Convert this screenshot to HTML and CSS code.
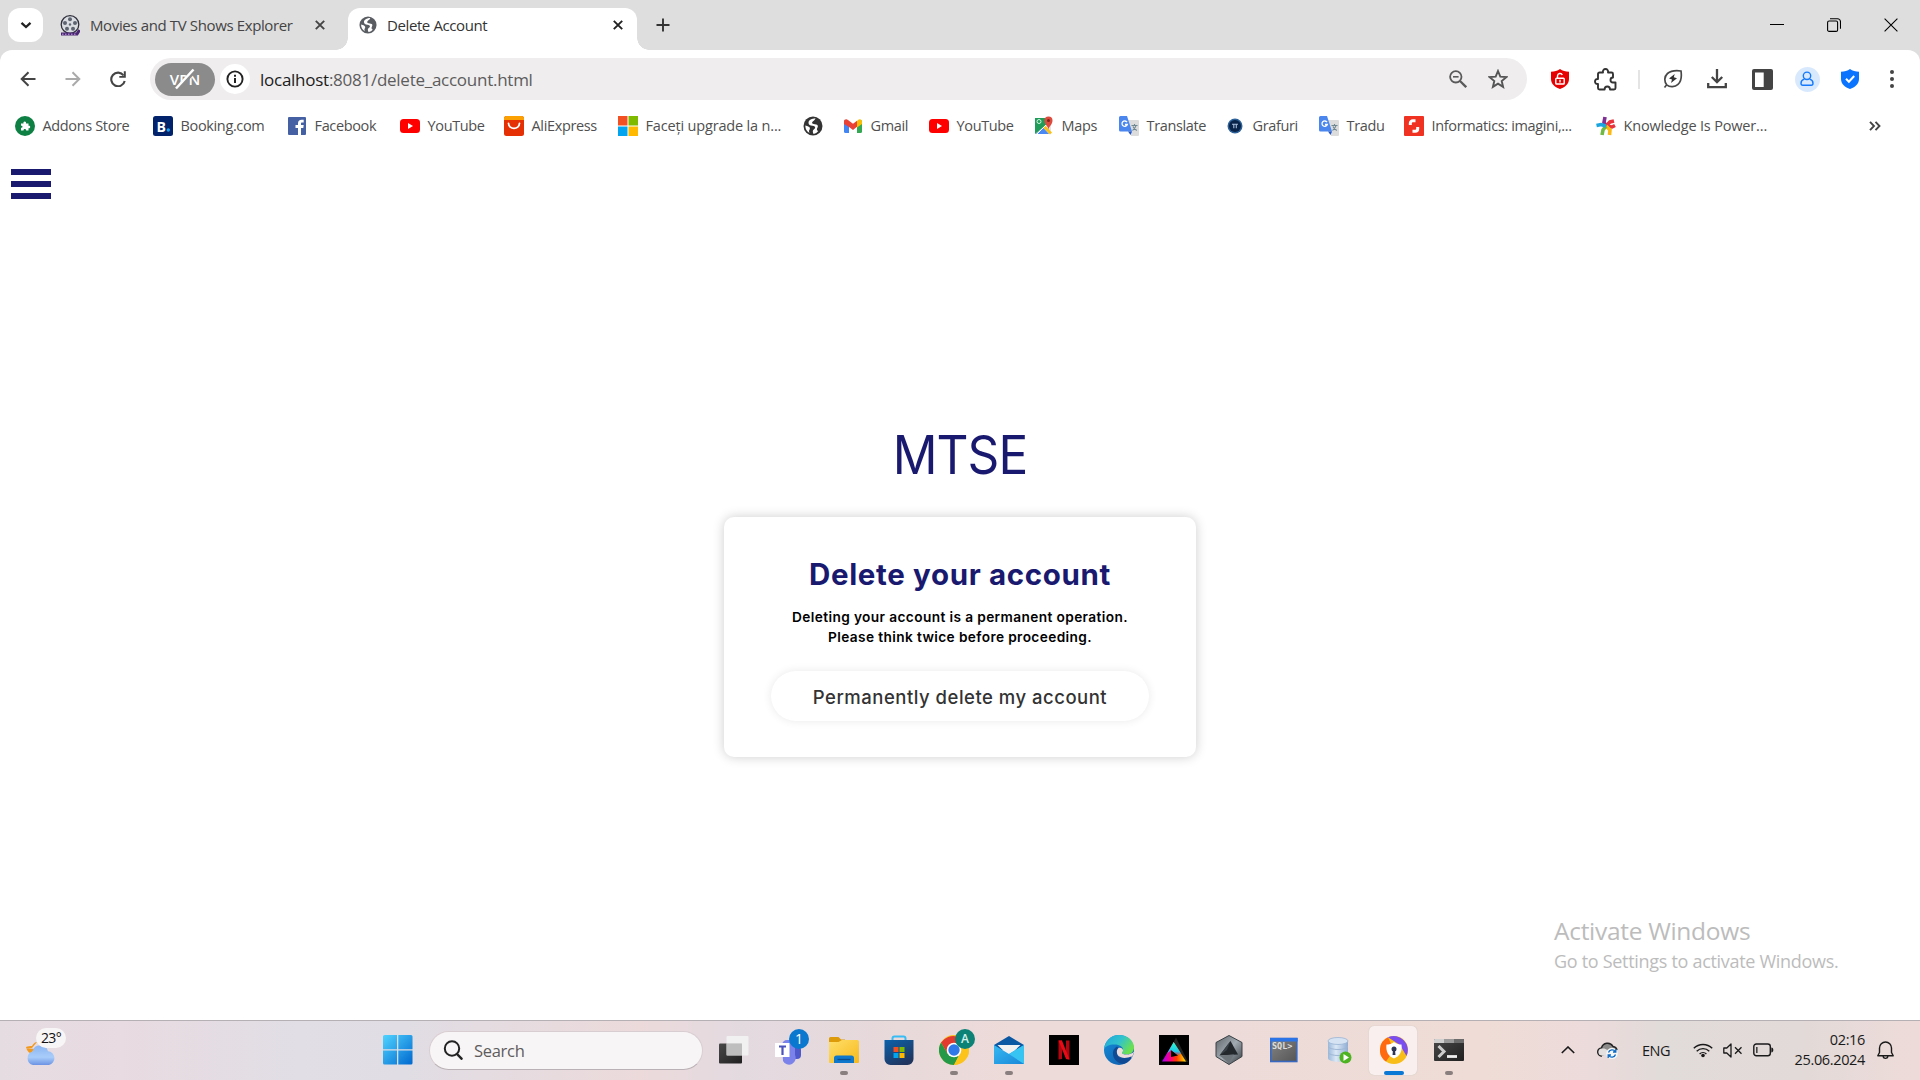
FILE: index.html
```html
<!DOCTYPE html>
<html lang="en">
<head>
<meta charset="utf-8">
<title>Delete Account</title>
<link rel="stylesheet" href="styles.css">
</head>
<body>
<svg class="defs" width="0" height="0" aria-hidden="true">
  <defs>
    <linearGradient id="gWin" x1="0" y1="0" x2="1" y2="1"><stop offset="0" stop-color="#4fd4ff"/><stop offset="1" stop-color="#0068cf"/></linearGradient>
    <linearGradient id="gCloud" x1="0" y1="0" x2="0" y2="1"><stop offset="0" stop-color="#8ab4f2"/><stop offset=".6" stop-color="#a9cdfa"/><stop offset="1" stop-color="#6c93e4"/></linearGradient>
    <linearGradient id="gStore" x1="0" y1="0" x2=".6" y2="1"><stop offset="0" stop-color="#0b62ab"/><stop offset="1" stop-color="#20365f"/></linearGradient>
    <linearGradient id="gFold" x1="0" y1="0" x2="1" y2="1"><stop offset="0" stop-color="#ffdf6b"/><stop offset="1" stop-color="#f7b91b"/></linearGradient>
    <linearGradient id="gMail" x1="0" y1="0" x2="1" y2="1"><stop offset="0" stop-color="#35b9f2"/><stop offset="1" stop-color="#1a87d8"/></linearGradient>
    <linearGradient id="gEdgeA" x1="0" y1="0" x2="1" y2=".5"><stop offset="0" stop-color="#1fa6dc"/><stop offset=".55" stop-color="#31c3cd"/><stop offset="1" stop-color="#6be04f"/></linearGradient>
    <linearGradient id="gEdgeB" x1="0" y1="0" x2="1" y2="1"><stop offset="0" stop-color="#158fdc"/><stop offset="1" stop-color="#0f56a6"/></linearGradient>
    <linearGradient id="gTri" x1="0" y1="1" x2="1" y2="1"><stop offset="0" stop-color="#a000ff"/><stop offset=".35" stop-color="#ff0080"/><stop offset=".6" stop-color="#ff3a00"/><stop offset="1" stop-color="#ffe600"/></linearGradient>
    <linearGradient id="gTriTop" x1="0" y1="0" x2="0" y2="1"><stop offset="0" stop-color="#20ffd0"/><stop offset=".7" stop-color="#20c8e8"/><stop offset="1" stop-color="#4060ff" stop-opacity=".2"/></linearGradient>
    <linearGradient id="gHex" x1="0" y1="0" x2="1" y2="1"><stop offset="0" stop-color="#5c6469"/><stop offset=".5" stop-color="#a3abb2"/><stop offset="1" stop-color="#33393e"/></linearGradient>
    <linearGradient id="gDb" x1="0" y1="0" x2="1" y2="0"><stop offset="0" stop-color="#9ab8da"/><stop offset=".4" stop-color="#dbe8f6"/><stop offset="1" stop-color="#8fadd2"/></linearGradient>
    <linearGradient id="gSql" x1="0" y1="0" x2="1" y2="1"><stop offset="0" stop-color="#858585"/><stop offset="1" stop-color="#555"/></linearGradient>
    <linearGradient id="gDark" x1="0" y1="0" x2="1" y2="1"><stop offset="0" stop-color="#484848"/><stop offset="1" stop-color="#202020"/></linearGradient>
    <symbol id="globe" viewBox="0 0 20 20"><circle cx="10" cy="10" r="9.5"/><path fill="#fff" d="M12.500 2.300C9 2.500 5.800 4 5.500 6.500c-.2 2.300 1.800 3 4 3.300 2 .3 3 1 2.600 2.200-.4 1.300-2.300 1.500-2.300 3.300 0 1 .3 1.900.8 2.600 1.800-.3 3.500-1.300 4.700-2.900-1-.3-1.600-1-1.300-2.200.3-1.300 1.200-2 .7-3.300-.5-1.200-2.400-1-4-1.500C9.300 7.600 8.700 7 9.300 6c.8-1.200 2.700-1.700 3.200-3.700zM2.300 9.500c.9.300 2.500.6 3.900 1.500 1.200.8.700 2.200 0 3.300-.4.800-.2 1.700.4 2.700-2.800-1.300-4.300-4.200-4.300-7.500z"/></symbol>
    <symbol id="yt" viewBox="0 0 20 20"><rect x="0" y="3" width="20" height="14" rx="3.500" fill="#f00"/><path d="M8 7v6l5-3z" fill="#fff"/></symbol>
    <symbol id="gtr" viewBox="0 0 20 20"><path d="M9 4h10a1 1 0 0 1 1 1v14a1 1 0 0 1-1 1h-7z" fill="#dcdcdc"/><path d="M1.500 0H8l5 15.500H1.500A1.500 1.500 0 0 1 0 14V1.500A1.500 1.500 0 0 1 1.500 0z" fill="#4a86ee"/><path d="M9 15.500h4L11.500 19z" fill="#2456c5"/><path d="M8 6.200A2.700 2.700 0 1 0 8.300 8.500H6" stroke="#fff" stroke-width="1.300" fill="none"/><path d="M12.500 9.500h6M15.500 8v1.500M17 9.500c-.5 2.500-2 4-3.500 5M14 10.500c.8 1.800 2 3 3.800 4" stroke="#6f8791" stroke-width="1.100" fill="none"/></symbol>
  </defs>
</svg>
<div class="browser">
  <header class="tabstrip">
    <div class="tab-search"><svg width="12" height="12" viewBox="0 0 12 12"><path d="M1.500 3.800 6 8l4.500-4.200" fill="none" stroke="#222" stroke-width="2.300"/></svg></div>
    <div class="tab">
      <svg class="fav" width="20" height="21" viewBox="0 0 20 21"><circle cx="10" cy="9.500" r="8.800" fill="#d9dde2" stroke="#30303c" stroke-width="1.300"/><g fill="#5d646f"><circle cx="10" cy="4.300" r="2"/><circle cx="5" cy="8" r="2"/><circle cx="15" cy="8" r="2"/><circle cx="7" cy="13.800" r="2"/><circle cx="13" cy="13.800" r="2"/><circle cx="10" cy="9.500" r="1.200"/></g><path d="M1 19h16l2.500-4" stroke="#4a2673" stroke-width="3" fill="none"/><path d="M2 19.200h14" stroke="#cda9ea" stroke-width="1" stroke-dasharray="1.500 1.500"/></svg>
      <span class="tab-title t-movies">Movies and TV Shows Explorer</span>
      <svg class="x" width="10" height="10" viewBox="0 0 10 10"><path d="m.8.800 8.400 8.400M9.200.800.800 9.200" stroke="#444" stroke-width="1.900"/></svg>
    </div>
    <div class="tab active">
      <svg class="fav" width="18" height="18" fill="#5a5e63"><use href="#globe"/></svg>
      <span class="tab-title t-delete">Delete Account</span>
      <svg class="x" width="10" height="10" viewBox="0 0 10 10"><path d="m.8.800 8.400 8.400M9.200.800.800 9.200" stroke="#222" stroke-width="1.900"/></svg>
    </div>
    <svg class="plus" width="14" height="14" viewBox="0 0 14 14"><path d="M7 .5v13M.5 7h13" stroke="#333" stroke-width="1.900"/></svg>
    <div class="winctl">
      <svg width="14" height="14" viewBox="0 0 14 14"><path d="M0 6.500h14" stroke="#000"/></svg>
      <svg width="14" height="14" viewBox="0 0 14 14"><rect x=".6" y="3" width="10" height="10.400" rx="1.500" fill="none" stroke="#000" stroke-width="1.100"/><path d="M3 .8h7.500a3 3 0 0 1 3 3v7" fill="none" stroke="#000" stroke-width="1.100"/></svg>
      <svg width="14" height="14" viewBox="0 0 14 14"><path d="m.6.600 12.800 12.800M13.400.600.600 13.400" stroke="#000" stroke-width="1.100"/></svg>
    </div>
  </header>

  <div class="toolbar">
    <div class="nav">
      <svg width="16" height="16" viewBox="0 0 16 16"><path d="M15.500 8H2M8.500 1.200 1.700 8l6.800 6.800" fill="none" stroke="#444" stroke-width="2"/></svg>
      <svg width="16" height="16" viewBox="0 0 16 16"><path d="M.5 8H14M7.500 1.200 14.300 8l-6.800 6.800" fill="none" stroke="#aaa" stroke-width="2"/></svg>
      <svg width="16" height="16" viewBox="0 0 16 16"><path d="M13.600 4.500A6.800 6.800 0 1 0 14.700 10" fill="none" stroke="#444" stroke-width="2.100"/><path d="M15.800.3v6.500H9.300V5h4.500V.3z" fill="#444"/></svg>
    </div>
    <div class="omnibox">
      <div class="vpn"><span>VPN</span><svg width="24" height="24" viewBox="0 0 24 24"><path d="M4 22.500 21.500 3.500" stroke="#8b8b8b" stroke-width="4.500"/><path d="M3 21.500 20.500 2.500" stroke="#fff" stroke-width="2.500"/></svg></div>
      <div class="info"><svg width="18" height="18" viewBox="0 0 18 18"><circle cx="9" cy="9" r="7.600" fill="none" stroke="#222" stroke-width="1.900"/><path d="M9 8v5M9 4.800v2" stroke="#222" stroke-width="2"/></svg></div>
      <div class="url"><b>localhost</b>:8081/delete_account.html</div>
      <svg class="zoomicon" width="18" height="18" viewBox="0 0 18 18"><circle cx="6.800" cy="6.800" r="5.700" fill="none" stroke="#5a5a5a" stroke-width="1.800"/><path d="M4 6.800h5.600" stroke="#5a5a5a" stroke-width="1.600"/><path d="m11 11 6.200 6.200" stroke="#5a5a5a" stroke-width="2.300"/></svg>
      <svg class="star" width="20" height="20" viewBox="0 0 20 20"><path d="m10 2 2.300 5.600 6 .5-4.600 3.900 1.400 5.900-5.100-3.200-5.100 3.200L6.300 12 1.700 8.100l6-.5z" fill="none" stroke="#555" stroke-width="1.900"/></svg>
    </div>
    <div class="actions">
      <svg width="18" height="20" viewBox="0 0 18 20"><path d="M9 0c2.500 1.800 5.500 2.600 9 2.700V10c0 5-4.200 8.500-9 10-4.800-1.500-9-5-9-10V2.700C3.500 2.600 6.500 1.800 9 0z" fill="#e60000"/><rect x="4.800" y="9.200" width="8.400" height="5.800" rx=".8" fill="none" stroke="#fff" stroke-width="1.400"/><path d="M6.500 9V6.800a2.500 2.500 0 0 1 4.800-.8M9 10.800v2.600" fill="none" stroke="#fff" stroke-width="1.400"/></svg>
      <svg width="23" height="23" viewBox="0 0 23 23"><path d="M5.500 4.500H9C8.500 2.400 9.800 1 11.500 1S14.500 2.400 14 4.500h3.500a1.500 1.500 0 0 1 1.500 1.500v3.500c-1.700 0-2.500 1-2.500 2.500s.8 2.500 2.500 2.500h2.500V20a1.500 1.500 0 0 1-1.500 1.500h-4c0-2-1-3-2.700-3s-2.700 1-2.700 3H5.500A1.500 1.500 0 0 1 4 20v-4c-1.800.2-3-.8-3-2.500s1.200-2.700 3-2.500V6a1.500 1.500 0 0 1 1.500-1.500z" fill="none" stroke="#333" stroke-width="1.900" stroke-linejoin="round"/></svg>
      <i class="sep"></i>
      <svg width="20" height="20" viewBox="0 0 20 20"><path d="M1.500 18.500 3.700 15.800M3.700 15.800C1 12.500 1.200 7.500 4.500 4.500 7.500 2 12 1.200 18 2c.8 5.500.2 10.500-3 13.300-3 2.700-8 3.200-11.300.5z" fill="none" stroke="#484848" stroke-width="1.700"/><path d="M11.700 5 6 9.500l3 1L8 14l6-4.800-3.200-1z" fill="#333"/></svg>
      <svg width="20" height="20" viewBox="0 0 20 20"><path d="M10 0v13M4.800 8 10 13.200 15.200 8" fill="none" stroke="#444" stroke-width="2.300"/><path d="M1.200 14v4.200h17.600V14" fill="none" stroke="#444" stroke-width="2.300"/></svg>
      <svg width="21" height="21" viewBox="0 0 21 21"><rect width="21" height="21" rx="2" fill="#444"/><rect x="3" y="3.500" width="8.700" height="14.500" fill="#fff"/></svg>
      <div class="person"><svg width="14" height="16" viewBox="0 0 14 16"><circle cx="7" cy="4.800" r="3.700" fill="none" stroke="#1479fb" stroke-width="1.400"/><path d="M4.300 8.200C2.200 8.800 1 10.300 1 12.300c0 1.200.7 2 1.800 2h8.400c1.100 0 1.800-.8 1.800-2 0-2-1.200-3.500-3.300-4.100" fill="none" stroke="#1479fb" stroke-width="1.400"/></svg></div>
      <svg width="18" height="20" viewBox="0 0 18 20"><path d="M9 0c2.500 1.800 5.500 2.600 9 2.700V10c0 5-4.200 8.500-9 10-4.800-1.500-9-5-9-10V2.700C3.500 2.600 6.500 1.800 9 0z" fill="#0a74ff"/><path d="m5 9.800 2.900 2.900L13.200 7" fill="none" stroke="#fff" stroke-width="2"/></svg>
      <svg width="4" height="18" viewBox="0 0 4 18" fill="#444"><circle cx="2" cy="2" r="2"/><circle cx="2" cy="9" r="2"/><circle cx="2" cy="16" r="2"/></svg>
    </div>
  </div>

  <nav class="bookmarks">
    <a><svg viewBox="0 0 20 20"><circle cx="10" cy="10" r="10" fill="#0e8044"/><path d="M6 7.500h2.500c-.3-1 .2-1.900 1.200-1.900s1.600.9 1.200 1.900h2.600v2.300c1-.3 1.700.3 1.700 1.200s-.8 1.500-1.700 1.200v2.300h-2.400c.1-1-.5-1.500-1.300-1.500s-1.400.5-1.300 1.500H6v-2.700c1 .1 1.500-.4 1.500-1s-.5-1.200-1.500-1z" fill="#fff"/></svg><span>Addons Store</span></a>
    <a><svg viewBox="0 0 20 20"><rect width="20" height="20" rx="2.500" fill="#02236c"/><text x="3.500" y="15.500" class="bk">B</text><circle cx="15.300" cy="14" r="1.700" fill="#1ea0f2"/></svg><span>Booking.com</span></a>
    <a><svg viewBox="0 0 20 20"><rect x="1" y="1" width="18" height="18" rx="1" fill="#4661a3"/><path d="M11 19v-7H8.500V9H11V7.500C11 5 12.300 3.800 14.700 3.800h2v2.800h-1.500c-1 0-1.200.4-1.200 1.300V9h2.700l-.4 3H14v7z" fill="#fff"/></svg><span>Facebook</span></a>
    <a><svg viewBox="0 0 20 20"><use href="#yt"/></svg><span>YouTube</span></a>
    <a><svg viewBox="0 0 20 20"><rect width="20" height="20" rx="2.500" fill="#e52f04"/><path d="M0 4V2.500A2.500 2.500 0 0 1 2.500 0h15A2.500 2.500 0 0 1 20 2.500V4z" fill="#fca103"/><path d="M4.500 7.300c.3 6.700 10.700 6.700 11 0" fill="none" stroke="#fff" stroke-width="1.800" stroke-linecap="round"/></svg><span>AliExpress</span></a>
    <a><svg viewBox="0 0 20 20"><path fill="#f25022" d="M0 0h9.500v9.500H0z"/><path fill="#7fba00" d="M10.500 0H20v9.500h-9.500z"/><path fill="#00a4ef" d="M0 10.500h9.500V20H0z"/><path fill="#ffb900" d="M10.500 10.500H20V20h-9.500z"/></svg><span class="w-face">Faceți upgrade la n...</span></a>
    <a><svg viewBox="0 0 20 20" fill="#333"><use href="#globe"/></svg></a>
    <a><svg viewBox="0 0 20 20"><path d="M1 4.500h1.500L6 7.300V17H2.500A1.500 1.500 0 0 1 1 15.500z" fill="#4285f4"/><path d="M14 7.300 17.500 4.500H19v11a1.500 1.500 0 0 1-1.500 1.500H14z" fill="#34a853"/><path d="M15 4c2-1.500 4-.5 4 1.800V8l-5 3.500V5z" fill="#fbbc04"/><path d="M1 8V5.500C1 3.500 3.200 2.500 5 4l5 3.800L14 4.700v6L10 14l-4-3z" fill="#ea4335"/></svg><span>Gmail</span></a>
    <a><svg viewBox="0 0 20 20"><use href="#yt"/></svg><span>YouTube</span></a>
    <a><svg viewBox="0 0 20 20"><rect x="1" y="2" width="16" height="16" fill="#e4e4e4"/><path d="M1 2h10l1 7-11 9z" fill="#1f9d58"/><path d="M2 18 9 11.500l6 6.500z" fill="#4a89f3"/><path d="m9 11.500 2-2 7 7-2 2z" fill="#fbc116"/><path d="M3 18 12 9" stroke="#fff" stroke-width="1"/><circle cx="5" cy="5.500" r="2" fill="none" stroke="#d7f1e2" stroke-width="1"/><path d="M14.500 14c0-4-4-5-4-9.500a4 4 0 0 1 8 0c0 4.500-4 5.500-4 9.500z" fill="#dd4b3e"/><circle cx="14.500" cy="4.500" r="1.500" fill="#7c231d"/></svg><span>Maps</span></a>
    <a><svg viewBox="0 0 20 20"><use href="#gtr"/></svg><span>Translate</span></a>
    <a><svg viewBox="0 0 20 20"><circle cx="10" cy="10" r="7.500" fill="#2d6199"/><circle cx="10" cy="10" r="6" fill="#0a2348"/><path d="M7 8.300h6M8.800 8.300v4M11.300 8.300v4" stroke="#a6bddc" stroke-width="1.100"/></svg><span>Grafuri</span></a>
    <a><svg viewBox="0 0 20 20"><use href="#gtr"/></svg><span>Tradu</span></a>
    <a><svg viewBox="0 0 20 20"><rect width="20" height="20" rx="1" fill="#f03222"/><path d="M11.500 4.800H8.800a2.500 2.500 0 0 0-2.500 2.500V9M8.500 15.200h2.700a2.500 2.500 0 0 0 2.500-2.500V11" fill="none" stroke="#fff" stroke-width="3"/></svg><span>Informatics: imagini,...</span></a>
    <a><svg viewBox="0 0 20 20" fill="none" stroke-width="3.600"><path d="M10 10 8 6.500 9 1" stroke="#7d2f92"/><path d="m10 10 6 1 3-1.500" stroke="#e8323c"/><path d="m10 10 4-4 4-1" stroke="#e8323c"/><path d="m10 10 4 4-.5 5" stroke="#fdb913"/><path d="m10 10-3 4-1 5" stroke="#72b944"/><path d="M10 10 5 8.500.5 9.500" stroke="#1ba5df"/></svg><span class="w-know">Knowledge Is Power...</span></a>
    <svg class="more" width="12" height="10" viewBox="0 0 12 10"><path d="m1 .8 4 4.200-4 4.200M6.500.800l4 4.200-4 4.200" fill="none" stroke="#444" stroke-width="1.900"/></svg>
  </nav>
</div>

<main class="page">
  <div class="burger"><i></i><i></i><i></i></div>
  <h1>MTSE</h1>
  <section class="card">
    <h2>Delete your account</h2>
    <p class="l1">Deleting your account is a permanent operation.</p>
    <p class="l2">Please think twice before proceeding.</p>
    <button>Permanently delete my account</button>
  </section>
  <div class="watermark"><div class="wm1">Activate Windows</div><div class="wm2">Go to Settings to activate Windows.</div></div>
</main>

<footer class="taskbar">
  <div class="weather"><svg width="42" height="40" viewBox="0 0 42 40"><path d="M0 19h6l5-6c-2 0-4 2-5 4-2 0-4 0-6 1 .5 3 2 5 4.500 6.500L9 20z" fill="#f29a1f"/><path d="M7 36a7 7 0 0 1-.5-13.500 8 8 0 0 1 15.500-.3A7 7 0 0 1 23 36z" fill="url(#gCloud)"/></svg><span>23°</span></div>
  <svg class="start" width="30" height="30" viewBox="0 0 30 30" fill="url(#gWin)"><path d="M1.500 0H14v14.200H0V1.500A1.500 1.500 0 0 1 1.500 0zM15.300 0h12.700A1.500 1.500 0 0 1 29.500 1.500v12.700H15.300zM0 15.500h14V29.500H1.500A1.500 1.500 0 0 1 0 28zM15.300 15.500h14.200V28a1.500 1.500 0 0 1-1.500 1.500H15.300z"/></svg>
  <div class="search"><svg width="20" height="20" viewBox="0 0 20 20"><circle cx="9" cy="8.500" r="7.200" fill="none" stroke="#222" stroke-width="2"/><path d="m14 14 4.500 4.700" stroke="#222" stroke-width="2.500" stroke-linecap="round"/></svg><span>Search</span></div>
  <div class="apps">
    <div class="app"><svg width="30" height="30" viewBox="0 0 30 30"><rect y="8.500" width="23" height="20" rx="1" fill="url(#gDark)"/><rect x="7.500" y="1" width="22" height="19.500" rx="1" fill="#f4f4f4" fill-opacity=".85"/><path d="M7.500 8.500H23v12H7.500z" fill="#b8b8b8" fill-opacity=".8"/></svg></div>
    <div class="app"><svg width="34" height="30" viewBox="0 0 34 30"><rect x="17" y="11" width="12" height="13" rx="4" fill="#5059c9"/><path d="M10 10a5 5 0 0 1 5-5h8v15a6 6 0 0 1-12 6z" fill="#7b83eb"/><rect x="3" y="8" width="14.500" height="14" fill="#fff"/><path d="M7 11.500h7M10.500 11.500v8.500" stroke="#4b53bc" stroke-width="2.200"/></svg><em class="badge blue">1</em></div>
    <div class="app run"><svg width="30" height="30" viewBox="0 0 30 30"><path d="M0 3.500A1.500 1.500 0 0 1 1.500 2h8L12 4.500h4V8H0z" fill="#dd9b0a"/><path d="M0 7h9.500L13 5h15.500A1.500 1.500 0 0 1 30 6.500V27a1 1 0 0 1-1 1H1a1 1 0 0 1-1-1z" fill="url(#gFold)"/><path d="M5 28v-5a2.500 2.500 0 0 1 2.500-2.500h15A2.500 2.500 0 0 1 25 23v5z" fill="#0f78cc"/><path d="M8.500 24.500h13" stroke="#0a4c8c" stroke-width="1.300"/></svg></div>
    <div class="app"><svg width="30" height="31" viewBox="0 0 30 31"><path d="M8.500 6V3.500a2 2 0 0 1 2-2h9a2 2 0 0 1 2 2V6" fill="none" stroke="#37bdf5" stroke-width="2"/><path d="M.5 5h29v19a6 6 0 0 1-6 6h-17a6 6 0 0 1-6-6z" fill="url(#gStore)"/><path fill="#f25022" d="M9.500 12h5v5h-5z"/><path fill="#7fba00" d="M15.500 12h5v5h-5z"/><path fill="#00a4ef" d="M9.500 18h5v5h-5z"/><path fill="#ffb900" d="M15.500 18h5v5h-5z"/></svg></div>
    <div class="app run"><svg width="30" height="30" viewBox="0 0 30 30"><circle cx="15" cy="15" r="15" fill="#fcc31b"/><path d="M15 15H29.300A15 15 0 0 0 2 7.500L8.500 18.700z" fill="#e23a2e"/><path d="M2 7.500A15 15 0 0 0 15 30L21.300 18.700 8.800 18.900z" fill="#249a48"/><path d="M15 8.200H28.400A15 15 0 0 1 15 30L21 18z" fill="#fcc31b"/><circle cx="15" cy="15" r="7.300" fill="#fff"/><circle cx="15" cy="15" r="5.700" fill="#2f78ea"/></svg><em class="badge green">A</em></div>
    <div class="app run"><svg width="30" height="30" viewBox="0 0 30 30"><path d="M0 10 15 1l15 9v5H0z" fill="#0a57a4"/><path d="M3.500 10h23L15 21z" fill="#f1f1f1"/><path d="M0 10v19h30V10L15 19z" fill="url(#gMail)"/><path d="M30 10v19L15 19z" fill="#37c4f3"/></svg></div>
    <div class="app"><svg width="30" height="30" viewBox="0 0 30 30"><path d="M0 0h30v30H0z"/><path d="M9.500 5.500H13V24l-3.500.5zM17 5.500h3.500v19L17 24z" fill="#b1060f"/><path d="M9.500 5.500H13l7.500 19L17 24z" fill="#ea0a15"/></svg></div>
    <div class="app"><svg width="30" height="30" viewBox="0 0 30 30"><circle cx="15" cy="15" r="15" fill="url(#gEdgeB)"/><path d="M0 14C1 6 7 0 15 0c9 0 15 6 15 12.500 0 4.500-3.500 7-7.500 7-3 0-4.500-1-4.500-2 0-.8 1-1.200 1-3C19 12 16 10 12 9.500 6 9 1.500 11 0 14z" fill="url(#gEdgeA)"/><path d="M13 11.500c-3 1.500-4.500 4.500-4 8C9.500 24 13 28 19 29c4-1 7-3.500 8.500-6.500-5 2.500-11 1.500-13.500-2-1.700-2.500-1.500-5.500 1-7z" fill="#104a94"/><path d="M14 20.500c-1.700-2.500-1.500-5.500.5-7.500 2.500-.8 5 1 4.500 3-.2 1-1 1-1 1.700 0 1 1.500 1.800 4.500 1.800 3 0 5.500-1 7.700-3L28 22.500c-5 2.500-11.500 1.500-14-2z" fill="#eddcdb"/><path d="M14 20.500c3 3.200 9 3 13.700.7L27 24c-5 1.500-10.500.5-13-3.500z" fill="#104a94"/></svg></div>
    <div class="app"><svg width="30" height="30" viewBox="0 0 30 30"><path d="M0 0h30v30H0z"/><path d="M17 2.500 29 27h-4L15 6.500z" fill="#222"/><path fill-rule="evenodd" d="M14.700 7 27 26.500H3zM12 15v7l7-1.500z" fill="url(#gTri)"/><path fill-rule="evenodd" d="M14.700 7 22 18.500l-3 2L12 15l-4.500 4.500z" fill="url(#gTriTop)"/></svg></div>
    <div class="app"><svg width="30" height="30" viewBox="0 0 30 30"><path d="M15 .5 28 7.500v14L15 29.500 2 21.500v-14z" fill="url(#gHex)" stroke="#394045"/><path d="M16.500 6 24 19.500 5.500 20.500z" fill="#23282d"/><path d="m16.500 6-3.500 9-7.500 5.500z" fill="#3a4248"/><path d="M5.500 20.500 20 19.500 15 28z" fill="#6d747a"/></svg></div>
    <div class="app"><svg width="28" height="26" viewBox="0 0 28 26"><rect x=".8" y="1.500" width="26" height="23" fill="url(#gSql)" stroke="#3868c0" stroke-width="1.600"/><path d="M0 1h27.600v3.500H0z" fill="#2a74e8"/><text x="2" y="12" class="sql">SQL&gt;</text></svg></div>
    <div class="app"><svg width="30" height="30" viewBox="0 0 30 30"><path d="M4 6v17c0 5 20 5 20 0V6z" fill="url(#gDb)"/><ellipse cx="14" cy="6" rx="10" ry="3.500" fill="#d5e3f3" stroke="#9ab4d3" stroke-width=".8"/><path d="M4 11.500c2 4 18 4 20 0M4 17.500c2 4 18 4 20 0" fill="none" stroke="#9fb7d5" stroke-width="1"/><circle cx="21.500" cy="22.500" r="6" fill="#4db320"/><path d="M19.500 19v7l5.500-3.500z" fill="#fff"/></svg></div>
    <div class="app current"><svg width="28" height="28" viewBox="0 0 28 28"><circle cx="14" cy="14" r="14" fill="#f8bd18"/><path d="M6 25.500A14 14 0 0 1 8 1.300L14 14z" fill="#ff6a10"/><path d="M8 1.300A14 14 0 0 1 26.500 20L20 9z" fill="#7a4df0"/><path d="M14 6c2.500 2 5 2.500 7.500 2.500 1 7-2 12-7.500 14-5.500-2-8.500-7-7.500-14C9 8.500 11.500 8 14 6z" fill="#fff"/><circle cx="14" cy="13" r="2.500" fill="#2c3553"/><path d="M13 14h2l.5 5h-3z" fill="#2c3553"/></svg></div>
    <div class="app run"><svg width="30" height="24" viewBox="0 0 30 24"><rect y="1" width="30" height="22" rx="1" fill="url(#gDark)"/><path d="M0 5V2a1 1 0 0 1 1-1h9v4z" fill="#d0d0d0"/><path d="M10 1h10v4H10z" fill="#9a9a9a"/><path d="M20 1h9a1 1 0 0 1 1 1v3H20z" fill="#6b6b6b"/><path d="m4.500 8 5.500 5.500L4.500 19" fill="none" stroke="#ccc" stroke-width="3"/><path d="M13 18.500h10" stroke="#eee" stroke-width="2.800"/></svg></div>
  </div>
  <div class="tray">
    <svg width="14" height="8" viewBox="0 0 14 8"><path d="m.8 7 6.200-6L13.200 7" fill="none" stroke="#1a1a1a" stroke-width="1.600"/></svg>
    <svg width="22" height="18" viewBox="0 0 22 18"><path d="M5 15a4 4 0 0 1-.5-8 6.200 6.200 0 0 1 11.500-1.500A4.500 4.500 0 0 1 20 9" fill="#8d8a8a" stroke="#222" stroke-width="1.500"/><path d="M5 14.500a3.500 3.500 0 0 1 0-7c4-.5 7 2 8 7z" fill="#e4e0e0"/><circle cx="15" cy="12.500" r="5.700" fill="#f6f6f6"/><path d="M11.500 11.500A3.800 3.800 0 0 1 18.300 10.500M18.500 13.500A3.800 3.800 0 0 1 11.700 14.500M18.800 8v3H16M11.200 17v-3H14" fill="none" stroke="#0b6ac6" stroke-width="1.300"/></svg>
    <span class="eng">ENG</span>
    <svg width="20" height="16" viewBox="0 0 20 16"><g fill="none" stroke="#1a1a1a" stroke-width="1.400"><path d="M.8 6.300a13 13 0 0 1 18.400 0M3.700 9.200a8.900 8.900 0 0 1 12.600 0M6.600 12a4.900 4.900 0 0 1 6.800 0"/></g><circle cx="10" cy="13.500" r="1.800" fill="#1a1a1a"/></svg>
    <svg width="20" height="15" viewBox="0 0 20 15"><path d="M.8 5h3L8 1v13l-4.200-4h-3z" fill="none" stroke="#1a1a1a" stroke-width="1.300" stroke-linejoin="round"/><path d="m12 4.200 6.500 6.500M18.500 4.200 12 10.700" stroke="#1a1a1a" stroke-width="1.300"/></svg>
    <svg width="21" height="14" viewBox="0 0 21 14"><rect x=".8" y="1" width="16.500" height="11.800" rx="2.500" fill="none" stroke="#1a1a1a" stroke-width="1.400"/><path d="M18.300 4.500c1.500.3 2 1.200 2 2.500s-.5 2.200-2 2.500z" fill="#1a1a1a"/><path d="M3.800 4v6" stroke="#444" stroke-width="1.600"/></svg>
    <div class="clock"><span class="c1">02:16</span><span class="c2">25.06.2024</span></div>
    <svg width="17" height="19" viewBox="0 0 17 19"><path d="M8.500 1a6 6 0 0 1 6 6v4.500l1.700 3.300H.8l1.700-3.300V7a6 6 0 0 1 6-6zM6 15.500a2.600 2.600 0 0 0 5 0" fill="none" stroke="#1a1a1a" stroke-width="1.400" stroke-linejoin="round"/></svg>
  </div>
</footer>
</body>
</html>
```
FILE: styles.css
```css
* { box-sizing: border-box; }
body { margin: 0; width: 1920px; height: 1080px; overflow: hidden; display: flex; flex-direction: column; background: #fff; font-family: "Open Sans", "Noto Sans", sans-serif; }
.defs { position: absolute; }
svg { display: block; flex: none; }

.browser { background: #dedede; height: 146px; flex: none; }
.tabstrip { height: 50px; display: flex; align-items: center; padding-left: 8px; }
.tab-search { width: 35px; height: 34px; background: #fff; border-radius: 12px; display: grid; place-items: center; }
.tab { display: flex; align-items: center; height: 42px; margin-top: 8px; padding-bottom: 8px; width: 289px; }
.tab:not(.active) { width: 305px; padding-left: 17px; }
.tab .fav { margin-right: 10px; }
.tab-title { font-size: 15px; color: #444; white-space: nowrap; flex: 1; }
.t-movies { letter-spacing: -.37px; }
.t-delete { letter-spacing: -.4px; color: #333; }
.tab .x { margin-right: 23px; }
.active { background: #fff; border-radius: 12px 12px 0 0; padding-left: 11px; position: relative; }
.active .x { margin-right: 14px; }
.active::before, .active::after { content: ""; position: absolute; bottom: 0; width: 12px; height: 12px; }
.active::before { left: -12px; background: radial-gradient(circle at 0 0, transparent 11.5px, #fff 12px); }
.active::after { right: -12px; background: radial-gradient(circle at 100% 0, transparent 11.5px, #fff 12px); }
.plus { margin-left: 19px; }
.winctl { display: flex; gap: 43px; margin-left: auto; padding-right: 22px; }

.toolbar { height: 58px; background: #fff; border-radius: 12px 12px 0 0; display: flex; align-items: center; }
.nav { width: 150px; display: flex; gap: 29px; padding-left: 20px; }
.omnibox { width: 1377px; height: 42px; border-radius: 21px; background: #efedee; display: flex; align-items: center; padding-left: 5px; }
.vpn { width: 60px; height: 33px; border-radius: 17px; background: #8b8b8b; color: #fff; display: grid; place-items: center; font: 600 15px "Open Sans", sans-serif; }
.vpn > * { grid-area: 1 / 1; }
.info { width: 30px; height: 30px; border-radius: 50%; background: #fff; display: grid; place-items: center; margin-left: 5px; }
.url { margin-left: 10px; flex: 1; font-size: 17px; color: #5c5c5c; letter-spacing: -.26px; }
.url b { font-weight: 400; color: #1c1c1c; }
.star { margin: 0 19px 0 21px; }
.actions { display: grid; grid-template-columns: 46px 44px 24px 43px 46px 44px 46px 40px 44px; place-items: center; margin-left: 10px; }
.sep { width: 2px; height: 19px; background: #e4e4e4; }
.person { width: 25px; height: 25px; border-radius: 50%; background: #d9e9fd; display: grid; place-items: center; }

.bookmarks { height: 38px; background: #fff; display: grid; grid-template-columns: 138px 134px 113px 104px 114px 185px 40px 86px 105px 85px 106px 94px 85px 192px 273px 12px; align-items: center; padding: 0 0 2px 15px; }
.bookmarks a { display: flex; align-items: center; gap: 7.5px; font-size: 14.5px; letter-spacing: -.35px; color: #505050; white-space: nowrap; }
.bookmarks span { margin-top: -2px; }
.bookmarks .w-face { letter-spacing: -.17px; }
.bookmarks .w-know { letter-spacing: -.17px; }
.bookmarks a svg { width: 20px; height: 20px; }
.bk { font: 700 14px "Open Sans", sans-serif; fill: #fff; }

.page { flex: 1; background: #fff; display: flex; flex-direction: column; align-items: center; font-family: Inter, sans-serif; }
.burger { align-self: flex-start; margin: 23px 0 0 11px; width: 40px; height: 30px; display: flex; flex-direction: column; justify-content: space-between; }
.burger i { height: 6px; background: #191970; }
h1 { margin: 223px 0 0; font-size: 53px; font-weight: 400; line-height: 66px; color: #191970; letter-spacing: -1px; transform: scaleX(.935); }
.card { margin-top: 29px; width: 472px; height: 240px; border-radius: 10px; box-shadow: 0 0 12px rgba(0,0,0,.2); display: flex; flex-direction: column; align-items: center; padding-top: 37px; white-space: nowrap; }
h2 { margin: 0 0 13px; font-size: 29.5px; line-height: 40px; color: #191970; letter-spacing: .65px; }
.card p { margin: 0; font-size: 13.7px; font-weight: 600; line-height: 20px; color: #000; letter-spacing: .38px; }
.card button { margin-top: 24px; width: 378px; height: 50px; flex: none; border: 0; border-radius: 25px; background: #fff; box-shadow: 0 0 10px rgba(0,0,0,.09); font: 500 18.5px Inter, sans-serif; letter-spacing: .5px; color: #333; padding: 1px 0 0; }
.watermark { align-self: flex-end; width: 366px; margin-top: 157px; color: #bcbcbc; font-family: "Open Sans", sans-serif; white-space: nowrap; }
.wm1 { font-size: 24.5px; line-height: 34px; letter-spacing: -.3px; }
.wm2 { font-size: 18px; line-height: 26px; letter-spacing: -.3px; }

.taskbar { height: 60px; flex: none; border-top: 1px solid #b5b0b3; background: linear-gradient(90deg, #e5dce2 0, #e8dbe1 120px, #e1dee5 300px, #e0dde4 400px, #ecdadb 640px, #e3dae0 740px, #e8d9da 900px, #eddbd9 1020px, #ecdbd9 1200px, #efdcd6 1480px, #ecdbdb 1590px, #e1dbd9 1660px, #e2dad8 1800px, #eedbd9 1920px); display: flex; align-items: center; padding-bottom: 1px; }
.weather { width: 383px; height: 40px; padding-left: 26px; position: relative; margin-top: -2px; }
.weather span { position: absolute; left: 36px; top: -1px; width: 30px; height: 20px; border-radius: 10px; background: #f8f5f6; font-size: 14px; line-height: 20px; text-align: center; letter-spacing: -.6px; color: #111; }
.search { margin-left: 16px; width: 274px; height: 39px; border-radius: 20px; background: #f8f5f6; border: 1px solid #d8ced2; border-bottom-color: #b9b1b5; display: flex; align-items: center; padding-left: 13px; gap: 11px; font-size: 16.5px; color: #5e5c5d; letter-spacing: -.3px; }
.apps { display: flex; margin-left: 3px; }
.app { width: 55px; height: 58px; display: grid; place-items: center; position: relative; }
.app.run::after, .app.current::after { content: ""; position: absolute; bottom: 4px; width: 8px; height: 4px; border-radius: 2px; background: #8a7f7f; }
.app.current::after { width: 20px; background: #0a78d4; }
.app.current::before { content: ""; position: absolute; left: 3px; top: 5px; width: 48px; height: 49px; border-radius: 5px; background: #f8efee; box-shadow: 0 0 1px #bba; }
.current svg { position: relative; }
.badge { position: absolute; left: 28px; top: 8px; width: 20px; height: 20px; border-radius: 50%; color: #fff; font: 400 14px/20px "Open Sans", sans-serif; text-align: center; }
.blue { background: #0b78d0; }
.green { background: #0c8277; color: #d5efec; font-weight: 600; font-size: 12px; left: 29px; }
.sql { font: 700 8.5px "DejaVu Sans Mono", monospace; fill: #ddd; }
.tray { margin: 0 15px 0 auto; display: grid; grid-template-columns: 40px 40px 56px 38px 22px 38px 83px 40px; place-items: center; font-size: 14.5px; color: #1a1a1a; }
.eng { letter-spacing: -.5px; }
.clock { width: 83px; display: flex; flex-direction: column; align-items: flex-end; line-height: 20px; letter-spacing: -.35px; margin-top: -1px; }
```
